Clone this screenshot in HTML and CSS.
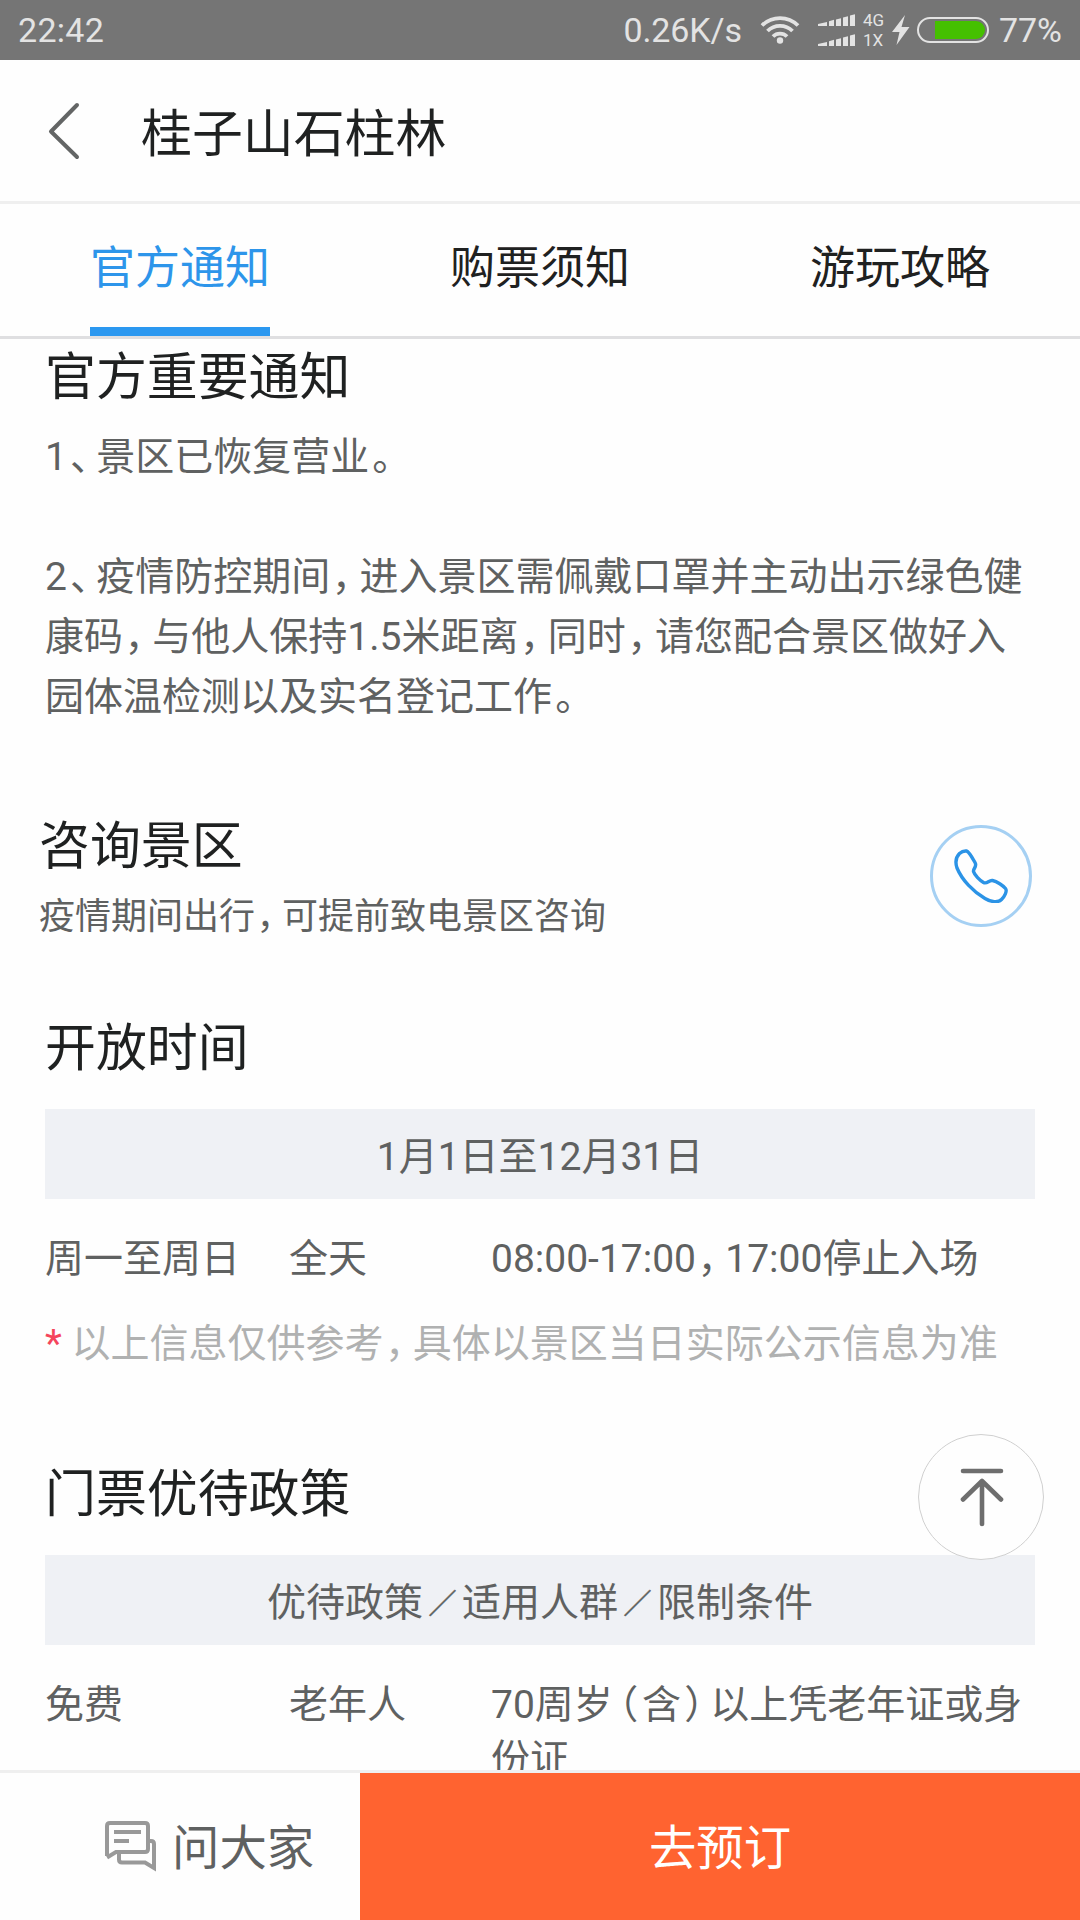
FILE: index.html
```html
<!DOCTYPE html>
<html lang="zh-CN">
<head>
<meta charset="utf-8">
<title>桂子山石柱林</title>
<link rel="stylesheet" href="styles.css">
</head>
<body>
<div class="status">
  <span class="clock">22:42</span>
  <div class="status-right">
    <span class="speed">0.26K/s</span>
    <svg class="wifi" width="40" height="30" viewBox="0 0 40 30" fill="none" stroke="#e3e3e3" stroke-width="3.8">
      <path d="M2 10.5a25.500 25.500 0 0 1 36 0M7.500 16a17.700 17.700 0 0 1 25 0M13 21.500a9.900 9.900 0 0 1 14 0"/>
      <circle cx="20" cy="25.500" r="3.200" fill="#e3e3e3" stroke="none"/>
    </svg>
    <div class="signals">
      <svg width="38" height="12" viewBox="0 0 38 12" fill="#e3e3e3"><path d="M0 12V10L9 8V12ZM11 12V7.200L16 5.800V12ZM18 12V5.500L23 4.200V12ZM25 12V3.500L30 2.200V12ZM32 12V1.600L37 .2V12Z"/></svg>
      <svg width="38" height="12" viewBox="0 0 38 12" fill="#e3e3e3"><path d="M0 12V10L9 8V12ZM11 12V7.200L16 5.800V12ZM18 12V5.500L23 4.200V12ZM25 12V3.500L30 2.200V12ZM32 12V1.600L37 .2V12Z"/></svg>
    </div>
    <div class="nets"><span>4G</span><span>1X</span></div>
    <svg class="bolt" width="18" height="30" viewBox="0 0 18 30" fill="#e3e3e3"><path d="M13 0L0 17H7.500L4.500 30L17.500 12H9.500Z"/></svg>
    <div class="battery"><div class="charge"></div></div>
    <span class="percent">77%</span>
  </div>
</div>

<header class="header">
  <svg class="back" width="32" height="58" viewBox="0 0 32 58" fill="none" stroke="#636565" stroke-width="4" stroke-linecap="round" stroke-linejoin="round"><path d="M29 3L3 29.500L29 55"/></svg>
  <h1 class="title">桂子山石柱林</h1>
</header>

<nav class="tabs">
  <div class="tab"><span class="tab-label active">官方通知</span></div>
  <div class="tab"><span class="tab-label">购票须知</span></div>
  <div class="tab"><span class="tab-label">游玩攻略</span></div>
</nav>

<main class="content">
  <section class="notice">
    <h2>官方重要通知</h2>
    <p>1<span class="p">、</span>景区已恢复营业<span class="p">。</span></p>
    <p class="second">2<span class="p">、</span>疫情防控期间<span class="c">，</span>进入景区需佩戴口罩并主动出示绿色健<br>康码<span class="c">，</span>与他人保持1.5米距离<span class="c">，</span>同时<span class="c">，</span>请您配合景区做好入<br>园体温检测以及实名登记工作<span class="p">。</span></p>
  </section>

  <section class="contact">
    <div class="contact-text">
      <h2>咨询景区</h2>
      <p>疫情期间出行<span class="c">，</span>可提前致电景区咨询</p>
    </div>
    <div class="phone">
      <svg width="54" height="54" viewBox="0 0 54 54" fill="none" stroke="#2b93e6" stroke-width="3.400" stroke-linejoin="round"><path d="M5.500 4.500C8 2.200 10.500 1.800 12.500 2C14.500 2.500 18.500 9 21 13.500C23.500 18 19 19 19.500 22.500C20.500 26 26 31.500 29.500 33.500C33 35.500 35 30.800 38.500 31.500C43 32.500 49 36.500 51.500 39.500C53.500 42 50.500 47.500 47.500 50.500C44 54 37 53 31 49.500C19 42.500 8 31 3 19C1 13 1.500 8.500 5.500 4.500Z"/></svg>
    </div>
  </section>

  <section class="hours">
    <h2>开放时间</h2>
    <div class="band">1月1日至12月31日</div>
    <div class="row"><span>周一至周日</span><span>全天</span><span>08:00-17:00<span class="c">，</span>17:00停止入场</span></div>
    <p class="note"><span class="star">*</span> 以上信息仅供参考<span class="c">，</span>具体以景区当日实际公示信息为准</p>
  </section>

  <section class="policy">
    <h2>门票优待政策</h2>
    <div class="band">优待政策<span class="slash">／</span>适用人群<span class="slash">／</span>限制条件</div>
    <div class="row"><span>免费</span><span>老年人</span><span>70周岁<span class="po">（</span>含<span class="pc">）</span>以上凭老年证或身<br>份证</span></div>
  </section>
</main>

<footer class="footer">
  <div class="ask">
    <svg width="52" height="52" viewBox="0 0 52 52" fill="none" stroke="#999" stroke-width="4"><path d="M2 35V5Q2 2 5 2H40Q43 2 43 5V28Q43 31 40 31H11L2 36.500"/><path d="M9 11H36M9 20H24"/><path d="M43 20H46Q49 20 49 23V47L40 41.500H17Q14 41.500 14 38.500V32"/></svg>
    <span class="ask-label">问大家</span>
  </div>
  <div class="book">去预订</div>
</footer>

<div class="to-top">
  <svg width="46" height="60" viewBox="0 0 46 60" fill="none" stroke="#6e6e6e" stroke-width="4.600" stroke-linecap="round" stroke-linejoin="round"><path d="M4 4H42M23 14V57M4 32.500L23 14L42 32.500"/></svg>
</div>
</body>
</html>
```
FILE: styles.css
```css
* { box-sizing: border-box; margin: 0; padding: 0; }

body {
  position: relative;
  display: flex;
  flex-direction: column;
  width: 1080px;
  height: 1920px;
  overflow: hidden;
  background: #fefefe;
  color: #5f6161;
  font-family: Roboto, "Noto Sans CJK SC", sans-serif;
  font-size: 39px;
}

h1, h2 { font-weight: 400; font-size: 50.9px; line-height: 60px; color: #1f2121; }
svg { display: block; flex: none; }

/* compact CJK punctuation: half-width glyphs with side bearings, 0.75em in all */
.p, .c, .po, .pc { font-feature-settings: "halt"; font-family: "Noto Sans CJK SC", sans-serif; line-height: 1; }
.p { margin: 0 0.17em 0 0.08em; }
.c { margin: 0 0.21em 0 0.04em; }
.po { margin: 0 0.1em 0 0.15em; }
.pc { margin: 0 0.17em 0 0.08em; }

.status {
  flex: none;
  display: flex;
  justify-content: space-between;
  height: 60px;
  padding: 0 18px;
  background: #757575;
  color: #e3e3e3;
  font-size: 34px;
  line-height: 60px;
}
.clock { letter-spacing: 0.3px; }
.status-right { display: flex; align-items: center; }
.speed { letter-spacing: -0.1px; }
.wifi { margin: 0 18px 0 18px; }
.signals { display: flex; flex-direction: column; gap: 8px; width: 38px; }
.nets {
  display: flex;
  flex-direction: column;
  width: 29px;
  margin-left: 7px;
  font-size: 17px;
  line-height: 20px;
}
.bolt { margin-right: 7px; }
.battery {
  width: 72px;
  height: 26px;
  margin-right: 10px;
  padding: 2px;
  border: 2px solid #e3e3e3;
  border-radius: 13px;
}
.charge { height: 18px; margin-left: 14px; border-radius: 0 9px 9px 0; background: #45c000; }

.header {
  flex: none;
  display: flex;
  align-items: center;
  height: 144px;
  padding-left: 48px;
  border-bottom: 3px solid #efefef;
}
.back { margin-top: 1px; }
.title { margin: 8px 0 0 61px; }

.tabs {
  flex: none;
  display: flex;
  height: 135px;
  border-bottom: 3px solid #dfdfe1;
  color: #1f2121;
  font-size: 45px;
}
.tab { flex: 1; display: flex; justify-content: center; }
.tab-label { line-height: 130px; height: 132px; }
.tab-label.active { color: #2d95ea; border-bottom: 9px solid #2b98f0; }

.content { flex: 1; min-height: 0; overflow: hidden; padding: 9px 45px 0; }
.notice { line-height: 60px; }
.notice p { margin-top: 19px; }
.notice .second { margin-top: 60px; white-space: nowrap; }

.contact {
  display: flex;
  justify-content: space-between;
  align-items: center;
  margin: 90px 3px 0 -6px;
}
.contact-text p { margin-top: 16px; padding-bottom: 1px; font-size: 36px; line-height: 48px; }
.phone {
  display: flex;
  align-items: center;
  justify-content: center;
  width: 102px;
  height: 102px;
  margin-bottom: 8px;
  border: 3px solid #a5d0f3;
  border-radius: 50%;
}

.hours { margin-top: 77px; }
.band {
  height: 90px;
  margin-top: 30px;
  padding-top: 7px;
  background: #eff1f5;
  line-height: 83px;
  text-align: center;
}
.slash { display: inline-block; width: 39px; font-size: 28px; line-height: 1; text-align: center; vertical-align: 2px; -webkit-text-stroke: 0.6px currentColor; }
.row {
  display: grid;
  grid-template-columns: 244px 202px 1fr;
  margin-top: 33px;
  line-height: 54px;
  white-space: nowrap;
}
.note { margin-top: 31px; line-height: 54px; color: #b0b1b1; white-space: nowrap; }
.star { color: #f5455c; }
.policy { margin-top: 94px; }

.footer {
  flex: none;
  display: flex;
  height: 150px;
  border-top: 3px solid #efefef;
  font-size: 47.4px;
  line-height: 152px;
}
.ask { display: flex; align-items: center; gap: 15px; width: 360px; padding-left: 105px; }
.ask-label { padding-top: 4px; }
.book { flex: 1; background: #ff6330; color: #fff; text-align: center; }

.to-top {
  position: absolute;
  left: 918px;
  top: 1434px;
  display: flex;
  align-items: center;
  justify-content: center;
  width: 126px;
  height: 126px;
  padding-left: 1px;
  border: 1.5px solid #d0d0d0;
  border-radius: 50%;
  background: #fefefe;
}
```
